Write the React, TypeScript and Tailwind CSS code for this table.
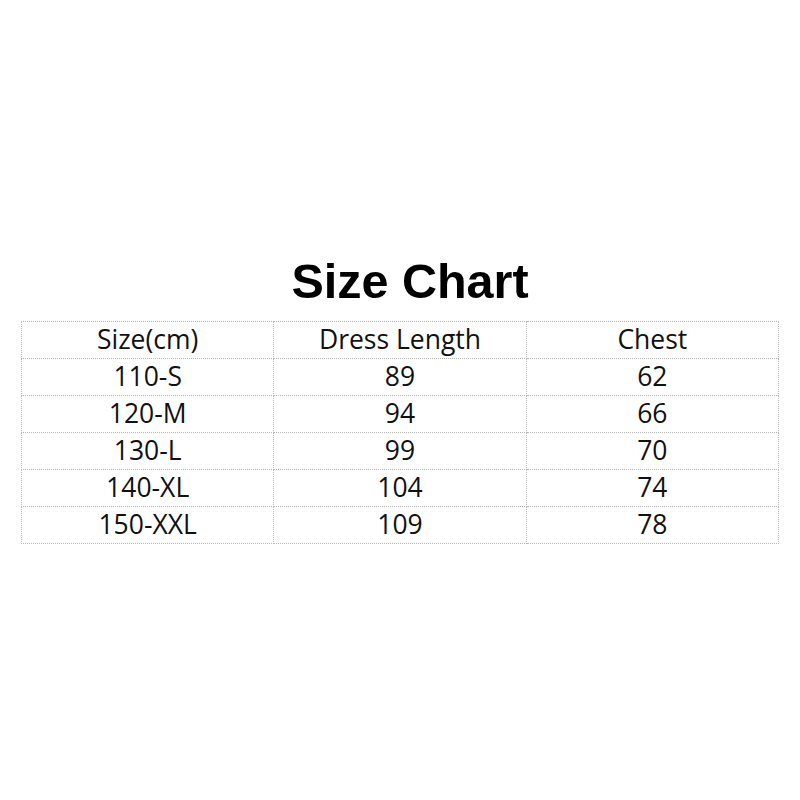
const rows = [
  ["110-S", "89", "62"],
  ["120-M", "94", "66"],
  ["130-L", "99", "70"],
  ["140-XL", "104", "74"],
  ["150-XXL", "109", "78"],
];

const cell =
  "h-[37px] p-0 text-center align-middle border border-dotted border-[#b8b8b8] leading-none";

export default function App() {
  return (
    <div className="w-[800px] h-[800px] bg-white flex flex-col pt-[257px] px-[21px]">
      <h1
        className="text-[48.5px] font-bold leading-none text-black text-center pl-[20px]"
        style={{ fontFamily: '"Liberation Sans", Arial, sans-serif' }}
      >
        Size Chart
      </h1>
      <table
        className="mt-[15px] w-[758px] table-fixed border-collapse text-[26.5px] text-[#111]"
        style={{ fontFamily: '"Open Sans", "Noto Sans", sans-serif' }}
      >
        <thead>
          <tr>
            <th className={`${cell} font-normal`}>Size(cm)</th>
            <th className={`${cell} font-normal`}>Dress Length</th>
            <th className={`${cell} font-normal`}>Chest</th>
          </tr>
        </thead>
        <tbody>
          {rows.map((r) => (
            <tr key={r[0]}>
              {r.map((v, i) => (
                <td key={i} className={cell}>
                  {v}
                </td>
              ))}
            </tr>
          ))}
        </tbody>
      </table>
    </div>
  );
}
